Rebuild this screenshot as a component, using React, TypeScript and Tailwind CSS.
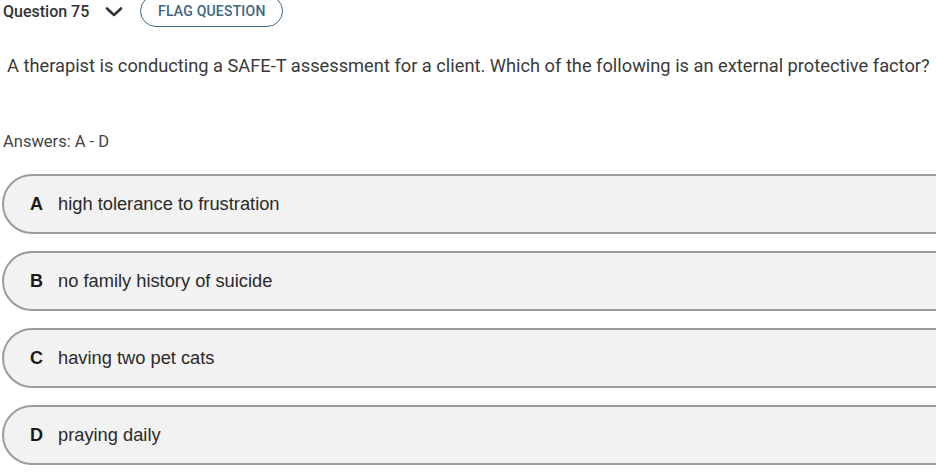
import React from 'react';

interface Answer {
  letter: string;
  text: string;
}

const answers: Answer[] = [
  { letter: 'A', text: 'high tolerance to frustration' },
  { letter: 'B', text: 'no family history of suicide' },
  { letter: 'C', text: 'having two pet cats' },
  { letter: 'D', text: 'praying daily' },
];

const ChevronDown = () => (
  <svg width="18" height="11" viewBox="0 0 18 11" fill="none" stroke="#333" strokeWidth="2.6" strokeLinecap="round" strokeLinejoin="round">
    <path d="M2 2.5l7 6.5 7-6.5" />
  </svg>
);

const App: React.FC = () => {
  return (
    <div className="w-[936px] h-[472px] overflow-hidden bg-white text-[#333]" style={{ fontFamily: 'Roboto, "Liberation Sans", sans-serif' }}>
      {/* header */}
      <div className="flex items-center h-[26px] mt-[-2px]">
        <span className="ml-[3px] mt-[1px] text-[16px] font-medium text-[#333]">Question 75</span>
        <span className="ml-[16px] mt-[1px] flex items-center"><ChevronDown /></span>
        <button className="ml-[17px] h-[32px] w-[143px] rounded-full border-[1.5px] border-[#3b6d8c] text-[14px] font-medium text-[#3d6683] tracking-[0.2px]">
          FLAG QUESTION
        </button>
      </div>

      <p className="mt-[30px] ml-[7px] text-[18.25px] leading-[24px] text-[#3a3a3a] whitespace-nowrap">
        A therapist is conducting a SAFE-T assessment for a client. Which of the following is an external protective factor?
      </p>

      <p className="mt-[54px] ml-[3px] text-[16.5px] leading-[20px] text-[#444]">Answers: A - D</p>

      <div className="mt-[22px] ml-[2px] flex flex-col gap-[17px]">
        {answers.map((a) => (
          <div
            key={a.letter}
            className="h-[60px] w-[960px] flex items-center rounded-l-[30px] border-2 border-[#9c9c9c] bg-[#f2f2f2]"
            style={{ fontFamily: '"Liberation Sans", Arial, sans-serif' }}
          >
            <span className="ml-[26px] w-[28px] text-[18px] font-bold text-[#1a1a1a]">{a.letter}</span>
            <span className="text-[18.3px] text-[#2a2a2a]">{a.text}</span>
          </div>
        ))}
      </div>
    </div>
  );
};

export default App;
